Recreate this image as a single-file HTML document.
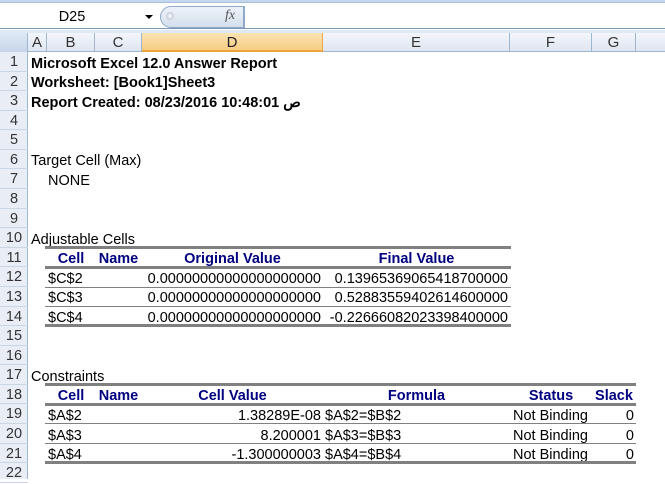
<!DOCTYPE html>
<html><head><meta charset="utf-8"><style>
*{margin:0;padding:0;box-sizing:border-box}
body{width:665px;height:479px;overflow:hidden;background:#fff;font-family:"Liberation Sans",Arial,"Noto Sans CJK SC",sans-serif;font-size:14.5px;color:#000;position:relative}
.abs{position:absolute}
#top{left:0;top:0;width:665px;height:3px;background:#c5d7ee;border-bottom:1px solid #a9c0dc}
#fbar{left:0;top:3px;width:665px;height:26px;background:#fff;border-bottom:1px solid #7d97b8}
#name{left:0;top:4px;width:156px;height:26px;text-align:center;line-height:26px;font-size:14.5px;padding-right:12px}
#arrow{left:145px;top:15px;width:0;height:0;border-left:4px solid transparent;border-right:4px solid transparent;border-top:4px solid #000}
#pill{left:160px;top:6px;width:84px;height:22px;border:1px solid #8fa9c9;border-radius:11px 0 0 11px;background:linear-gradient(#eef3fa,#d3deec)}
#dot{left:166px;top:12px;width:8px;height:8px;border-radius:50%;background:radial-gradient(#fff,#a8b4c4)}
#fx{left:225px;top:8px;font-family:"Liberation Serif",serif;font-style:italic;font-size:14px;color:#555}
#fsep{left:244px;top:6px;width:1px;height:22px;background:#8fa9c9}
#gap{left:0;top:30px;width:665px;height:3px;background:#dfe8f5}
#hdr{left:0;top:33px;width:665px;height:19px;background:linear-gradient(#f3f6fb,#dfe6f0);border-bottom:1px solid #9eb6ce}
.ch{position:absolute;top:33px;height:19px;line-height:20px;text-align:center;color:#333;border-right:1px solid #9eb6ce;font-size:15px}
#corner{left:0;top:33px;width:28px;height:19px;background:linear-gradient(#dfe8f4,#c7d6ea);border-right:1px solid #9eb6ce}
#rh{left:0;top:52px;width:28px;height:427px;background:#e9eef6;border-right:1px solid #9eb6ce}
.rn{position:absolute;left:0;width:28px;height:19.58px;line-height:21px;text-align:center;color:#333;border-bottom:1px solid #c9d6e6;font-size:14.5px}
.t{position:absolute;white-space:nowrap;line-height:19.58px;padding-top:2.5px}
.b{font-weight:bold}
.h{font-weight:bold;color:#000080;text-align:center}
.r{text-align:right}
.hl{position:absolute;background:#808080}
</style></head><body>
<div class="abs" id="top"></div>
<div class="abs" id="fbar"></div>
<div class="abs" id="name">D25</div>
<div class="abs" id="arrow"></div>
<div class="abs" id="pill"></div>
<div class="abs" id="dot"></div>
<div class="abs" id="fx">fx</div>
<div class="abs" id="fsep"></div>
<div class="abs" id="gap"></div>
<div class="abs" id="hdr"></div>
<div class="abs" id="corner"></div>
<div class="ch" style="left:28px;width:19px">A</div>
<div class="ch" style="left:47px;width:48px">B</div>
<div class="ch" style="left:95px;width:47px">C</div>
<div class="ch" style="left:142px;width:181px;background:linear-gradient(#fbe3b4,#f6cd82);border-bottom:2px solid #f0a33c;border-right:1px solid #e9a84f;color:#222">D</div>
<div class="ch" style="left:323px;width:187px">E</div>
<div class="ch" style="left:510px;width:82px">F</div>
<div class="ch" style="left:592px;width:44px">G</div>
<div class="abs" id="rh"></div>
<div class="rn" style="top:52px">1</div><div class="rn" style="top:71.58px">2</div><div class="rn" style="top:91.16px">3</div><div class="rn" style="top:110.74px">4</div><div class="rn" style="top:130.32px">5</div><div class="rn" style="top:149.9px">6</div><div class="rn" style="top:169.48px">7</div><div class="rn" style="top:189.06px">8</div><div class="rn" style="top:208.64px">9</div><div class="rn" style="top:228.22px">10</div><div class="rn" style="top:247.8px">11</div><div class="rn" style="top:267.38px">12</div><div class="rn" style="top:286.96px">13</div><div class="rn" style="top:306.54px">14</div><div class="rn" style="top:326.12px">15</div><div class="rn" style="top:345.7px">16</div><div class="rn" style="top:365.28px">17</div><div class="rn" style="top:384.86px">18</div><div class="rn" style="top:404.44px">19</div><div class="rn" style="top:424.02px">20</div><div class="rn" style="top:443.6px">21</div><div class="rn" style="top:463.18px">22</div>

<div class="t b" style="left:31px;top:52px">Microsoft Excel 12.0 Answer Report</div>
<div class="t b" style="left:31px;top:71.58px">Worksheet: [Book1]Sheet3</div>
<div class="t b" style="left:31px;top:91.16px">Report Created: 08/23/2016 10:48:01 ص</div>
<div class="t" style="left:31px;top:149.9px">Target Cell (Max)</div>
<div class="t" style="left:48px;top:169.48px">NONE</div>
<div class="t" style="left:31px;top:228.22px">Adjustable Cells</div>

<div class="hl" style="left:45px;top:246px;width:466px;height:3px"></div>
<div class="t h" style="left:47px;width:48px;top:247.8px">Cell</div>
<div class="t h" style="left:95px;width:47px;top:247.8px">Name</div>
<div class="t h" style="left:142px;width:181px;top:247.8px">Original Value</div>
<div class="t h" style="left:323px;width:187px;top:247.8px">Final Value</div>
<div class="hl" style="left:45px;top:266px;width:466px;height:3px"></div>
<div class="t" style="left:48px;top:267.38px">$C$2</div>
<div class="t r" style="left:120px;width:201px;top:267.38px">0.00000000000000000000</div>
<div class="t r" style="left:300px;width:208px;top:267.38px">0.13965369065418700000</div>
<div class="hl" style="left:45px;top:286.5px;width:466px;height:1px"></div>
<div class="t" style="left:48px;top:286.96px">$C$3</div>
<div class="t r" style="left:120px;width:201px;top:286.96px">0.00000000000000000000</div>
<div class="t r" style="left:300px;width:208px;top:286.96px">0.52883559402614600000</div>
<div class="hl" style="left:45px;top:306px;width:466px;height:1px"></div>
<div class="t" style="left:48px;top:306.54px">$C$4</div>
<div class="t r" style="left:120px;width:201px;top:306.54px">0.00000000000000000000</div>
<div class="t r" style="left:300px;width:208px;top:306.54px">-0.22666082023398400000</div>
<div class="hl" style="left:45px;top:323.5px;width:466px;height:3px"></div>

<div class="t" style="left:31px;top:365.28px">Constraints</div>
<div class="hl" style="left:45px;top:382.5px;width:591px;height:3px"></div>
<div class="t h" style="left:47px;width:48px;top:384.86px">Cell</div>
<div class="t h" style="left:95px;width:47px;top:384.86px">Name</div>
<div class="t h" style="left:142px;width:181px;top:384.86px">Cell Value</div>
<div class="t h" style="left:323px;width:187px;top:384.86px">Formula</div>
<div class="t h" style="left:510px;width:82px;top:384.86px">Status</div>
<div class="t h" style="left:592px;width:44px;top:384.86px">Slack</div>
<div class="hl" style="left:45px;top:402.5px;width:591px;height:3px"></div>
<div class="t" style="left:48px;top:404.44px">$A$2</div>
<div class="t r" style="left:142px;width:179px;top:404.44px">1.38289E-08</div>
<div class="t" style="left:325px;top:404.44px">$A$2=$B$2</div>
<div class="t" style="left:513px;top:404.44px">Not Binding</div>
<div class="t r" style="left:592px;width:42px;top:404.44px">0</div>
<div class="hl" style="left:45px;top:423px;width:591px;height:1px"></div>
<div class="t" style="left:48px;top:424.02px">$A$3</div>
<div class="t r" style="left:142px;width:179px;top:424.02px">8.200001</div>
<div class="t" style="left:325px;top:424.02px">$A$3=$B$3</div>
<div class="t" style="left:513px;top:424.02px">Not Binding</div>
<div class="t r" style="left:592px;width:42px;top:424.02px">0</div>
<div class="hl" style="left:45px;top:442.5px;width:591px;height:1px"></div>
<div class="t" style="left:48px;top:443.6px">$A$4</div>
<div class="t r" style="left:142px;width:179px;top:443.6px">-1.300000003</div>
<div class="t" style="left:325px;top:443.6px">$A$4=$B$4</div>
<div class="t" style="left:513px;top:443.6px">Not Binding</div>
<div class="t r" style="left:592px;width:42px;top:443.6px">0</div>
<div class="hl" style="left:45px;top:460.5px;width:591px;height:3px"></div>
</body></html>
